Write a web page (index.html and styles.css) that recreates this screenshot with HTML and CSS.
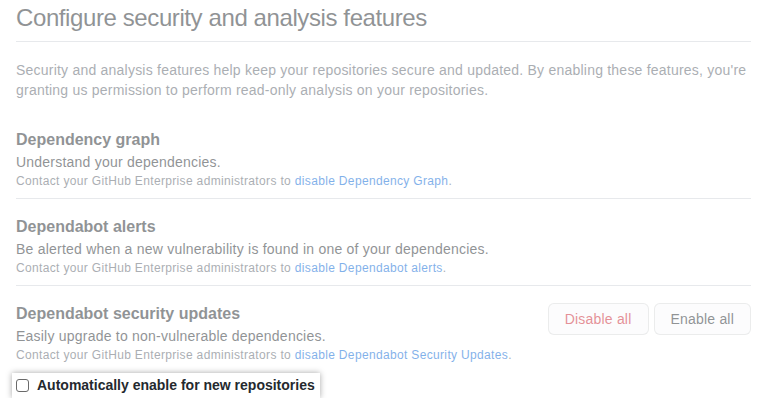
FILE: index.html
```html
<!DOCTYPE html>
<html lang="en">
<head>
<meta charset="utf-8">
<title>Configure security and analysis features</title>
<link rel="stylesheet" href="styles.css">
</head>
<body>
<div class="page">
  <div class="faded">
    <div class="subhead">
      <h2 class="subhead-title">Configure security and analysis features</h2>
    </div>
    <p class="intro">Security and analysis features help keep your repositories secure and updated. By enabling these features, you're granting us permission to perform read-only analysis on your repositories.</p>

    <div class="feature bordered">
      <h3 class="feature-title">Dependency graph</h3>
      <p class="feature-desc">Understand your dependencies.</p>
      <p class="feature-note">Contact your GitHub Enterprise administrators to <a href="#">disable Dependency Graph</a>.</p>
    </div>

    <div class="feature bordered">
      <h3 class="feature-title">Dependabot alerts</h3>
      <p class="feature-desc">Be alerted when a new vulnerability is found in one of your dependencies.</p>
      <p class="feature-note">Contact your GitHub Enterprise administrators to <a href="#">disable Dependabot alerts</a>.</p>
    </div>

    <div class="feature last">
      <div class="feature-row">
        <div class="feature-text">
          <h3 class="feature-title">Dependabot security updates</h3>
          <p class="feature-desc">Easily upgrade to non-vulnerable dependencies.</p>
          <p class="feature-note">Contact your GitHub Enterprise administrators to <a href="#">disable Dependabot Security Updates</a>.</p>
        </div>
        <div class="actions">
          <button class="btn btn-danger" type="button">Disable all</button>
          <button class="btn" type="button">Enable all</button>
        </div>
      </div>
    </div>
  </div>

  <div class="highlight">
    <label class="check-label"><input class="check" type="checkbox"> Automatically enable for new repositories</label>
  </div>
</div>
</body>
</html>
```

FILE: styles.css
```css
html, body {
  margin: 0;
  padding: 0;
  background: #ffffff;
}

body {
  font-family: "Liberation Sans", Arial, sans-serif;
  color: #24292e;
  font-size: 14px;
  line-height: 20px;
}

.page {
  padding: 3px 12px 0 16px;
}

.faded {
  opacity: 0.5;
}

.subhead {
  padding-bottom: 8px;
  border-bottom: 1px solid #d1d5da;
}

.subhead-title {
  margin: 0;
  font-size: 24px;
  font-weight: 400;
  line-height: 30px;
  letter-spacing: -0.4px;
}

.intro {
  margin: 18px 0 0;
  color: #586069;
  font-size: 14px;
  line-height: 20px;
  letter-spacing: 0.22px;
}

.feature {
  padding: 16px 0 8px;
}

.bordered {
  border-bottom: 1px solid #d1d5da;
}

.intro + .feature {
  padding-top: 28px;
}

.feature.last {
  padding-bottom: 0;
}

.feature-row {
  display: flex;
  align-items: flex-start;
  justify-content: space-between;
}

.feature-title {
  margin: 0;
  font-size: 16px;
  font-weight: 700;
  line-height: 24px;
  color: #24292e;
}

.feature-desc {
  margin: 0;
  font-size: 14px;
  line-height: 20px;
  color: #24292e;
  letter-spacing: 0.22px;
}

.feature-note {
  margin: 0;
  font-size: 12px;
  line-height: 18px;
  color: #586069;
  letter-spacing: 0.34px;
}

.feature-note a {
  color: #0366d6;
  text-decoration: none;
}

.actions {
  display: flex;
  gap: 5px;
  margin-top: 1px;
}

.btn {
  font-family: "Liberation Sans", Arial, sans-serif;
  font-size: 14px;
  line-height: 20px;
  letter-spacing: 0.2px;
  padding: 5px 16px;
  border: 1px solid rgba(27, 31, 35, 0.15);
  border-radius: 6px;
  background: #fafbfc;
  color: #24292e;
  font-weight: 400;
}

.btn-danger {
  color: #cb2431;
}

.highlight {
  display: inline-flex;
  margin: 9px 0 0 -4px;
  padding: 2px 5px 3px 4px;
  background: #ffffff;
  box-shadow: 0 0 6px rgba(0, 0, 0, 0.35);
}

.check-label {
  display: flex;
  align-items: center;
  font-weight: 700;
  font-size: 14px;
  line-height: 20px;
  color: #24292e;
}

.check {
  appearance: none;
  -webkit-appearance: none;
  width: 13px;
  height: 13px;
  margin: 0 8px 0 0;
  border: 1px solid #6a6a6a;
  border-radius: 3px;
  background: #fff;
}
```
